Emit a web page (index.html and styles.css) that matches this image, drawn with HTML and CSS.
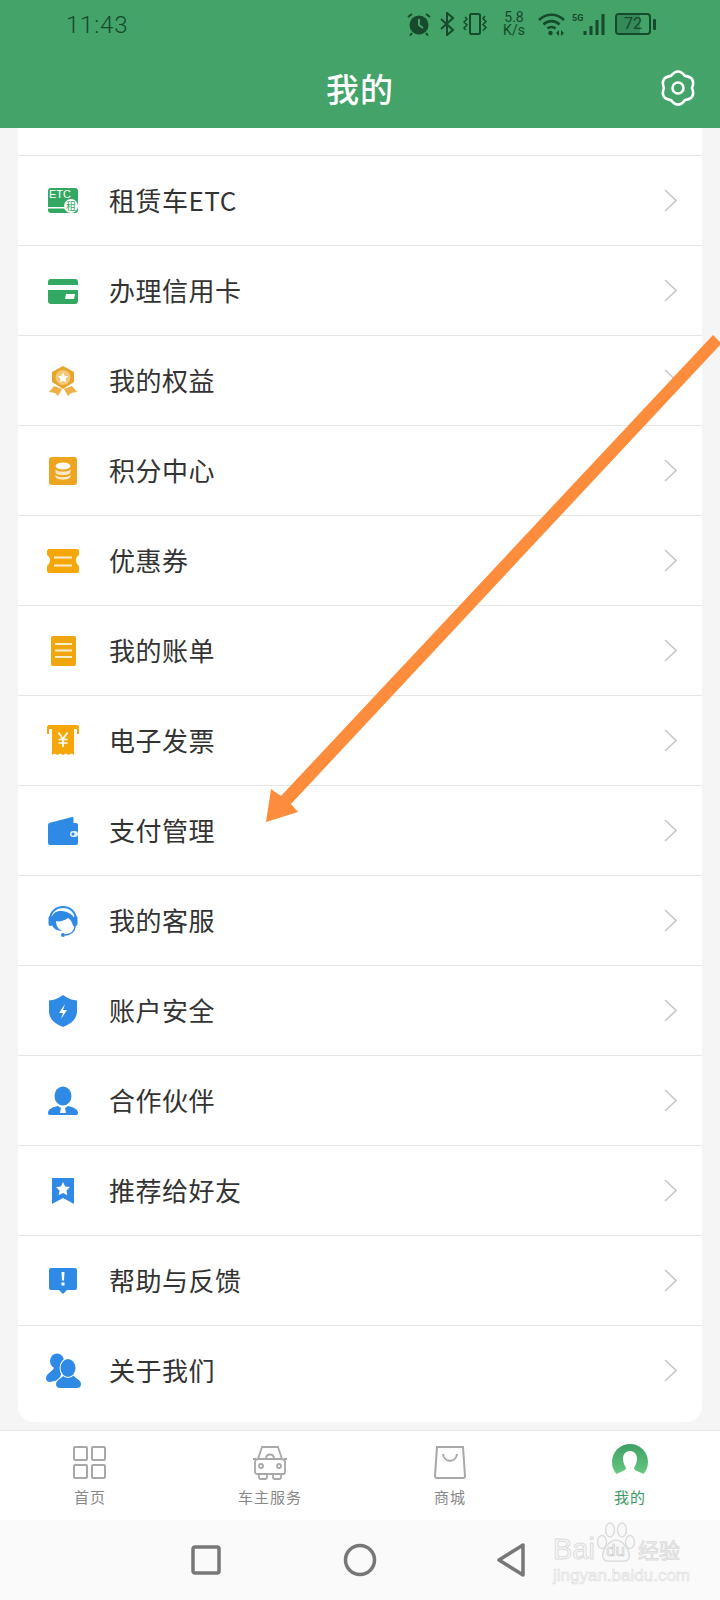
FILE: index.html
```html
<!DOCTYPE html>
<html lang="zh-CN">
<head>
    <meta charset="UTF-8">
    <meta name="viewport" content="width=device-width, initial-scale=1.0">
    <title>我的</title>
    <link rel="stylesheet" href="styles.css">
</head>
<body>
    <header class="topbar">
        <div class="status-bar">
            <span class="time">11:43</span>
            <div class="status-icons">
                <svg class="st-alarm" width="24" height="24" viewBox="0 0 24 24"><circle cx="12" cy="13" r="9.500" fill="#17492c"/><path d="M12 7v6l4 3" fill="none" stroke="#43a368" stroke-width="2"/><path d="M1 5l4-3M23 5l-4-3M5 21l-2 2.500M19 21l2 2.500" stroke="#17492c" stroke-width="2"/></svg>
                <svg class="st-bt" width="14" height="24" viewBox="0 0 14 24"><path d="M1 7l12 11-6 5V1l6 5L1 17" fill="none" stroke="#17492c" stroke-width="2"/></svg>
                <svg class="st-vib" width="26" height="22" viewBox="0 0 26 22"><rect x="8" y="1" width="10" height="20" rx="1.500" fill="none" stroke="#17492c" stroke-width="2"/><path d="M3 4l2 2-3 3 3 3-3 3 2 2M23 3l-2 2.500 3 3-3 3 3 3-3 3" fill="none" stroke="#17492c" stroke-width="1.500"/></svg>
                <div class="speed"><span>5.8</span><span>K/s</span></div>
                <svg class="st-wifi" width="27" height="23" viewBox="0 0 27 23"><path d="M1 7c7-7 18-7 25 0M5.500 11.500c4.500-4.500 11.500-4.500 16 0M9.500 15.500c2-2 6-2 8 0" fill="none" stroke="#17492c" stroke-width="2.600"/><circle cx="12.500" cy="20" r="2.200" fill="#17492c"/><path d="M18 20l3-3v6zM23 17l3 3-3 3z" fill="#17492c"/></svg>
                <div class="st-net">
                    <span class="net-label">5G</span>
                    <svg width="23" height="22" viewBox="0 0 23 22"><path d="M2 18v4M8 13v9M14 7v15M20 1v21" stroke="#17492c" stroke-width="3"/></svg>
                </div>
                <div class="battery"><span class="battery-fill"></span><span class="battery-num">72</span></div>
                <span class="battery-nub"></span>
            </div>
        </div>
        <div class="title-row">
            <span></span>
            <h1>我的</h1>
            <svg class="gear" width="36" height="38" viewBox="0 0 36 38"><path d="M11 6.900Q18-2 25 6.900Q36.200 8.500 32 19Q36.200 29.500 25 31.100Q18 40 11 31.100Q-.2 29.500 4 19Q-.2 8.500 11 6.900Z" fill="none" stroke="#fff" stroke-width="2.600" stroke-linejoin="round"/><circle cx="18" cy="19" r="5.500" fill="none" stroke="#fff" stroke-width="2.600"/></svg>
        </div>
    </header>

    <main class="page">
        <div class="card">
            <div class="card-top"></div>

            <div class="row">
                <svg class="row-icon" viewBox="0 0 36 36"><rect x="3" y="5" width="30" height="25" rx="3" fill="#33a862"/><rect x="3" y="24" width="19" height="1.500" fill="#fff"/><text x="4" y="14.500" class="icon-etc">ETC</text><circle cx="26" cy="23" r="7" fill="#fff"/><text x="26" y="27" class="icon-zu">租</text></svg>
                <span class="row-label">租赁车ETC</span>
                <svg class="chevron" width="13" height="23" viewBox="0 0 13 23"><path d="M1 1l11 10.500L1 22"/></svg>
            </div>
            <div class="row">
                <svg class="row-icon" viewBox="0 0 36 36"><rect x="3" y="6" width="30" height="25" rx="3" fill="#33a862"/><rect x="3" y="12" width="30" height="5" fill="#fff"/><path d="M21 21h9l-1 5h-9z" fill="#fff"/></svg>
                <span class="row-label">办理信用卡</span>
                <svg class="chevron" width="13" height="23" viewBox="0 0 13 23"><path d="M1 1l11 10.500L1 22"/></svg>
            </div>
            <div class="row">
                <svg class="row-icon" viewBox="0 0 36 36"><path d="M9 23l-5 6 6 1 3 3 4-7zM27 23l5 6-6 1-3 3-4-7z" fill="#eeb044"/><path d="M18 3l11 6v10l-11 7-11-7V9z" fill="#e8a52a"/><circle cx="18" cy="14.500" r="7.500" fill="#f3c877"/><path d="M18 9.500l1.600 3.300 3.600.5-2.600 2.500.6 3.600-3.200-1.700-3.200 1.700.6-3.600-2.600-2.500 3.600-.5z" fill="#fff"/></svg>
                <span class="row-label">我的权益</span>
                <svg class="chevron" width="13" height="23" viewBox="0 0 13 23"><path d="M1 1l11 10.500L1 22"/></svg>
            </div>
            <div class="row">
                <svg class="row-icon" viewBox="0 0 36 36"><rect x="4" y="4" width="28" height="28" rx="3" fill="#eda41f"/><ellipse cx="18" cy="13" rx="7.500" ry="3.500" fill="#fff"/><path d="M10.500 16c1 3.500 14 3.500 15 0v3.500c-1 3.500-14 3.500-15 0z" fill="#fbe7c2"/><path d="M10.500 21.500c1 3.500 14 3.500 15 0V24c-1 3.500-14 3.500-15 0z" fill="#fbe7c2"/></svg>
                <span class="row-label">积分中心</span>
                <svg class="chevron" width="13" height="23" viewBox="0 0 13 23"><path d="M1 1l11 10.500L1 22"/></svg>
            </div>
            <div class="row">
                <svg class="row-icon" viewBox="0 0 36 36"><path d="M4 6h28c1 0 2 1 2 2v4c-4 2-4 8 0 11v5c0 1-1 2-2 2H4c-1 0-2-1-2-2v-5c4-3 4-9 0-11V8c0-1 1-2 2-2z" fill="#f5a70a"/><path d="M9 14.500h18M9 22.500h18" stroke="#fdeecb" stroke-width="2.200"/></svg>
                <span class="row-label">优惠券</span>
                <svg class="chevron" width="13" height="23" viewBox="0 0 13 23"><path d="M1 1l11 10.500L1 22"/></svg>
            </div>
            <div class="row">
                <svg class="row-icon" viewBox="0 0 36 36"><rect x="6" y="3" width="25" height="30" rx="2" fill="#f0a60f"/><path d="M10 11h17M10 17.500h17M10 24h17" stroke="#fdeecb" stroke-width="2"/></svg>
                <span class="row-label">我的账单</span>
                <svg class="chevron" width="13" height="23" viewBox="0 0 13 23"><path d="M1 1l11 10.500L1 22"/></svg>
            </div>
            <div class="row">
                <svg class="row-icon" viewBox="0 0 36 36"><path d="M2 11V4c0-1 1-2 2-2h28c1 0 2 1 2 2v7h-2V6H4v5z" fill="#f5a70a"/><path d="M7 6h22v26l-2.750-1.500L23.500 32l-2.750-1.500L18 32l-2.750-1.500L12.500 32l-2.750-1.500L7 32z" fill="#f5a70a"/><path d="M13.500 9.500L18 16l4.500-6.500M18 16v8M13.500 16.500h9M13.500 20h9" fill="none" stroke="#fff" stroke-width="1.700"/></svg>
                <span class="row-label">电子发票</span>
                <svg class="chevron" width="13" height="23" viewBox="0 0 13 23"><path d="M1 1l11 10.500L1 22"/></svg>
            </div>
            <div class="row">
                <svg class="row-icon" viewBox="0 0 36 36"><path d="M4 10L27 4c1-.2 1.500.500 1.500 1.500V10z" fill="#2f8ae6"/><rect x="3" y="10" width="30" height="22" rx="2" fill="#2f8ae6"/><rect x="25" y="18" width="8" height="6" rx="3" fill="#fff" opacity=".85"/><circle cx="28" cy="21" r="1.500" fill="#2f8ae6"/></svg>
                <span class="row-label">支付管理</span>
                <svg class="chevron" width="13" height="23" viewBox="0 0 13 23"><path d="M1 1l11 10.500L1 22"/></svg>
            </div>
            <div class="row">
                <svg class="row-icon" viewBox="0 0 36 36"><path d="M5 17C5 9 11 4 18 4s13 5 13 13" fill="none" stroke="#2f8ae6" stroke-width="2"/><path d="M6 18c0-6 4-10 9-10 5 0 11 1 15 8l1 7c-2 1-3 0-3.500-2-1-3-2.500-5-4.500-6-4 3-9 4-12 3 0 4 2 9 7 10l-1 0C11 28 6 24 6 18z" fill="#2f8ae6"/><rect x="3.500" y="13" width="4" height="10" rx="2" fill="#2f8ae6"/><rect x="28.500" y="13" width="4" height="10" rx="2" fill="#2f8ae6"/><path d="M30 23c0 5-4 8.500-10 9" fill="none" stroke="#2f8ae6" stroke-width="1.500"/><circle cx="18" cy="32" r="2" fill="#2f8ae6"/></svg>
                <span class="row-label">我的客服</span>
                <svg class="chevron" width="13" height="23" viewBox="0 0 13 23"><path d="M1 1l11 10.500L1 22"/></svg>
            </div>
            <div class="row">
                <svg class="row-icon" viewBox="0 0 36 36"><path d="M18 2l4 2.500c2.500 1.500 5.500 2.500 10 3V18c0 8-6 13-14 16C10 31 4 26 4 18V7.500c4.500-.5 7.500-1.500 10-3z" fill="#2f8ae6"/><path d="M20 11l-6 9h4l-2 6 6-9h-4z" fill="#fff"/></svg>
                <span class="row-label">账户安全</span>
                <svg class="chevron" width="13" height="23" viewBox="0 0 13 23"><path d="M1 1l11 10.500L1 22"/></svg>
            </div>
            <div class="row">
                <svg class="row-icon" viewBox="0 0 36 36"><ellipse cx="18" cy="13" rx="8.500" ry="9.500" fill="#2f8ae6"/><path d="M3 30c0-4 5-6 10-7l3 2-1 5h6l-1-5 3-2c5 1 10 3 10 7 0 1.500-1 2-2 2H5c-1 0-2-.5-2-2z" fill="#2f8ae6"/></svg>
                <span class="row-label">合作伙伴</span>
                <svg class="chevron" width="13" height="23" viewBox="0 0 13 23"><path d="M1 1l11 10.500L1 22"/></svg>
            </div>
            <div class="row">
                <svg class="row-icon" viewBox="0 0 36 36"><path d="M7 5h22v26l-11-6-11 6z" fill="#2f8ae6"/><path d="M18 9l2.200 4.400 4.800.7-3.500 3.400.8 4.800-4.300-2.300-4.300 2.300.8-4.800-3.500-3.400 4.800-.7z" fill="#fff"/></svg>
                <span class="row-label">推荐给好友</span>
                <svg class="chevron" width="13" height="23" viewBox="0 0 13 23"><path d="M1 1l11 10.500L1 22"/></svg>
            </div>
            <div class="row">
                <svg class="row-icon" viewBox="0 0 36 36"><path d="M6 5h24c1 0 2 1 2 2v18c0 1-1 2-2 2h-8l-4 4-4-4H6c-1 0-2-1-2-2V7c0-1 1-2 2-2z" fill="#2f8ae6"/><path d="M16.500 9h3l-.5 8.500h-2z" fill="#fff"/><rect x="16.500" y="19.500" width="3" height="3" fill="#fff"/></svg>
                <span class="row-label">帮助与反馈</span>
                <svg class="chevron" width="13" height="23" viewBox="0 0 13 23"><path d="M1 1l11 10.500L1 22"/></svg>
            </div>
            <div class="row row-last">
                <svg class="row-icon" viewBox="0 0 36 36"><ellipse cx="12" cy="8" rx="7" ry="7.500" fill="#2f8ae6"/><path d="M9 14c0 4-8 6-8 11 0 3 2 4 4 4l9-2 4-11-3-2z" fill="#2f8ae6"/><g fill="#2f8ae6" stroke="#fff" stroke-width="2" paint-order="stroke"><path d="M19 21c0 4-8 5-8 10 0 3 2 4 4 4h17c2 0 4-1 4-4 0-5-8-6-8-10z"/><ellipse cx="23" cy="15" rx="7.500" ry="9"/></g></svg>
                <span class="row-label">关于我们</span>
                <svg class="chevron" width="13" height="23" viewBox="0 0 13 23"><path d="M1 1l11 10.500L1 22"/></svg>
            </div>
        </div>
    </main>

    <nav class="tabbar">
        <div class="tab">
            <svg width="36" height="36" viewBox="0 0 36 36"><g fill="none" stroke="#a8a8a8" stroke-width="2"><rect x="2" y="3" width="13" height="13" rx="1"/><rect x="20" y="3" width="13" height="13" rx="1"/><rect x="2" y="21" width="13" height="13" rx="1"/><rect x="20" y="21" width="13" height="13" rx="1"/></g></svg>
            <span>首页</span>
        </div>
        <div class="tab">
            <svg width="36" height="36" viewBox="0 0 36 36"><g fill="none" stroke="#a8a8a8" stroke-width="1.800"><path d="M6 15l4-12h16l4 12"/><path d="M3 18c0-2 2-3 4-3h22c2 0 4 1 4 3v10c0 1-1 2-2 2H5c-1 0-2-1-2-2z"/><path d="M14 15c0-6 8-6 8 0"/><circle cx="9" cy="22" r="2"/><circle cx="27" cy="22" r="2"/><path d="M7 30v3c0 1 1 2 2 2h4c1 0 2-1 2-2v-3M21 30v3c0 1 1 2 2 2h4c1 0 2-1 2-2v-3"/><path d="M1 15h3M32 15h3"/></g></svg>
            <span>车主服务</span>
        </div>
        <div class="tab">
            <svg width="36" height="36" viewBox="0 0 36 36"><g fill="none" stroke="#a8a8a8" stroke-width="2"><path d="M5 3h26l2 29c0 1-1 2-2 2H5c-1 0-2-1-2-2z"/><path d="M11 10c1 9 13 9 14 0"/></g></svg>
            <span>商城</span>
        </div>
        <div class="tab tab-active">
            <svg width="36" height="36" viewBox="0 0 36 36"><defs><linearGradient id="av" x1="0" y1="0" x2="0" y2="1"><stop offset="0" stop-color="#3e9f66"/><stop offset="1" stop-color="#6fd083"/></linearGradient></defs><ellipse cx="18" cy="18" rx="18" ry="18" fill="url(#av)"/><path d="M18 7c5 0 7 4 7 8 0 4-2 7-3 9 0 3 7 4 11 7-3 3-9 5-15 5S6 34 3 31c4-3 11-4 11-7-1-2-3-5-3-9 0-4 2-8 7-8z" fill="#fff"/></svg>
            <span>我的</span>
        </div>
    </nav>

    <footer class="system-nav">
        <svg width="30" height="30" viewBox="0 0 30 30"><rect x="2" y="2" width="26" height="26" rx="2" fill="none" stroke="#777" stroke-width="3.500"/></svg>
        <svg width="34" height="34" viewBox="0 0 34 34"><circle cx="17" cy="17" r="14.500" fill="none" stroke="#777" stroke-width="3.500"/></svg>
        <svg class="nav-back" width="30" height="34" viewBox="0 0 30 34"><path d="M27 2v30L3 17z" fill="none" stroke="#777" stroke-width="3.500" stroke-linejoin="round"/></svg>
    </footer>

    <div class="watermark">
        <div class="wm-logo">
            <span>Bai</span>
            <div class="wm-paw">
                <svg width="41" height="42" viewBox="0 0 41 42"><g fill="#f8f8f8" stroke="#ddd" stroke-width="1.500"><ellipse cx="7" cy="20" rx="4.500" ry="6.500"/><ellipse cx="15" cy="8" rx="4.500" ry="7"/><ellipse cx="27" cy="8" rx="4.500" ry="7"/><ellipse cx="35" cy="20" rx="4.500" ry="6.500"/><path d="M21 18c6 0 15 10 13 18-2 5-9 3-13 3s-11 2-13-3c-2-8 7-18 13-18z"/></g></svg>
                <span class="wm-du">du</span>
            </div>
            <span class="wm-cn">经验</span>
        </div>
        <div class="wm-url">jingyan.baidu.com</div>
    </div>

    <!-- annotation drawn on top of the screenshot -->
    <svg class="arrow" width="720" height="1600" viewBox="0 0 720 1600"><path d="M713 335L720 342V345L291 804L298 812L266 822L271 789L281 796Z" fill="#fd8d3c"/></svg>
</body>
</html>
```

FILE: styles.css
```css
* {
    box-sizing: border-box;
}
body {
    font-family: "Noto Sans CJK SC", "Liberation Sans", sans-serif;
    background-color: #f5f5f5;
    color: #333;
    display: flex;
    flex-direction: column;
    width: 720px;
    height: 1600px;
    margin: 0;
    overflow: hidden;
    position: relative;
}

/* top green area */
.topbar {
    background-color: #43a368;
    height: 128px;
    flex-shrink: 0;
}
.status-bar {
    display: flex;
    align-items: center;
    height: 48px;
    padding: 0 64px 0 66px;
    color: #17492c;
}
.time {
    font-family: Roboto, sans-serif;
    font-weight: 300;
    font-size: 24px;
    letter-spacing: 0.8px;
    padding-top: 2px;
}
.status-icons {
    display: flex;
    align-items: center;
    margin-left: auto;
}
.st-bt { margin-left: 9px; }
.st-vib { margin-left: 8px; }
.speed {
    display: flex;
    flex-direction: column;
    align-items: center;
    width: 24px;
    margin-left: 14px;
    font-family: Roboto, sans-serif;
    font-size: 14px;
    line-height: 13px;
}
.st-wifi { margin-left: 12px; }
.st-net {
    display: flex;
    align-items: flex-start;
    height: 22px;
    margin-left: 7px;
}
.net-label {
    font-family: Roboto, sans-serif;
    font-weight: 700;
    font-size: 9px;
    line-height: 10px;
    width: 11px;
}
.battery {
    position: relative;
    width: 36px;
    height: 22px;
    margin-left: 9px;
    border: 2px solid #17492c;
    border-radius: 4px;
    font-family: Roboto, sans-serif;
    font-size: 16px;
    line-height: 18px;
    text-align: center;
    overflow: hidden;
}
.battery-fill {
    position: absolute;
    left: 0;
    top: 0;
    bottom: 0;
    width: 72%;
    background-color: #348a58;
}
.battery-num {
    position: relative;
}
.battery-nub {
    width: 3px;
    height: 11px;
    margin-left: 2px;
    background-color: #17492c;
    border-radius: 1px;
}
.title-row {
    display: grid;
    grid-template-columns: 1fr auto 1fr;
    align-items: center;
    height: 80px;
    padding: 0 24px;
}
.title-row h1 {
    margin: 0;
    color: #fff;
    font-size: 33px;
    font-weight: 500;
    letter-spacing: 1px;
}
.gear {
    justify-self: end;
    overflow: visible;
}

/* menu card */
.page {
    flex: 1;
    padding: 0 18px;
}
.card {
    background-color: #fff;
    border-radius: 0 0 16px 16px;
}
.card-top {
    height: 28px;
    border-bottom: 1px solid #e6e6e6;
}
.row {
    display: flex;
    align-items: center;
    height: 90px;
    padding: 0 25px 0 27px;
    border-bottom: 1px solid #e6e6e6;
}
.row-last {
    height: 96px;
    padding-bottom: 7px;
    border-bottom: none;
}
.row-icon {
    width: 36px;
    height: 36px;
    flex-shrink: 0;
}
.icon-etc {
    font-family: "Liberation Sans", sans-serif;
    font-size: 11px;
    fill: #fff;
}
.icon-zu {
    font-size: 10px;
    fill: #33a862;
    text-anchor: middle;
}
.row-label {
    margin-left: 28px;
    padding-bottom: 2px;
    font-size: 26px;
    letter-spacing: 0.5px;
    color: #333;
}
.chevron {
    margin-left: auto;
    fill: none;
    stroke: #c8c8c8;
    stroke-width: 1.6;
}

/* bottom tabs */
.tabbar {
    display: grid;
    grid-template-columns: repeat(4, 1fr);
    height: 90px;
    flex-shrink: 0;
    padding-top: 13px;
    background-color: #fff;
    border-top: 1px solid #e6e6e6;
}
.tab {
    display: flex;
    flex-direction: column;
    align-items: center;
    font-size: 15px;
    line-height: 22px;
    letter-spacing: 1px;
    color: #888;
}
.tab span {
    margin-top: 6px;
}
.tab-active {
    color: #3d9a60;
}
.system-nav {
    display: flex;
    align-items: center;
    justify-content: center;
    gap: 122px;
    height: 80px;
    flex-shrink: 0;
    padding-right: 4px;
    background-color: #fafafa;
}
.nav-back {
    margin-left: -3px;
}

/* baidu stamp and arrow sit over the page */
.watermark {
    position: absolute;
    left: 553px;
    top: 1522px;
    width: 130px;
    color: #f8f8f8;
    -webkit-text-stroke: 1px #ddd;
    font-family: "Liberation Sans", sans-serif;
}
.wm-logo {
    display: flex;
    align-items: flex-end;
    height: 42px;
    font-size: 29px;
    line-height: 30px;
    white-space: nowrap;
}
.wm-paw {
    position: relative;
    width: 41px;
    height: 42px;
}
.wm-paw svg {
    display: block;
}
.wm-du {
    position: absolute;
    left: 11px;
    bottom: 4px;
    font-size: 17px;
    line-height: 18px;
    -webkit-text-stroke: 0.7px #ccc;
}
.wm-cn {
    font-family: "Noto Sans CJK SC", sans-serif;
    font-size: 21px;
    margin-left: 2px;
}
.wm-url {
    margin-top: 3px;
    font-size: 17px;
    line-height: 18px;
    white-space: nowrap;
    -webkit-text-stroke: 0.6px #ddd;
}
.arrow {
    position: absolute;
    left: 0;
    top: 0;
    pointer-events: none;
}
```
